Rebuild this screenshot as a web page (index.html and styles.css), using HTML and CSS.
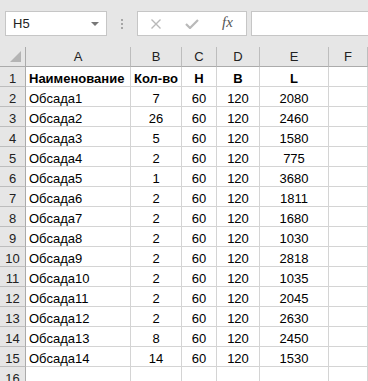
FILE: index.html
```html
<!DOCTYPE html>
<html lang="ru">

<head>
    <meta charset="UTF-8">
    <meta name="viewport" content="width=device-width, initial-scale=1.0">
    <title>Обсада</title>
    <link rel="stylesheet" href="styles.css">
</head>

<body>
    <div class="toolbar">
        <div class="name-box">
            <span>H5</span>
            <span class="arrow"></span>
        </div>
        <div class="grip"><i></i><i></i><i></i></div>
        <div class="buttons">
            <svg class="icon" width="12" height="10" viewBox="0 0 12 10">
                <path d="M1.5 0.5 L10.5 9.5 M10.5 0.5 L1.5 9.5" stroke="#b9b9b9" stroke-width="1.4" fill="none"/>
            </svg>
            <svg class="icon" width="14" height="10" viewBox="0 0 14 10">
                <path d="M1 5 L5 9 L13 1" stroke="#b9b9b9" stroke-width="2.2" fill="none"/>
            </svg>
            <span class="fx">fx</span>
        </div>
        <div class="formula"></div>
    </div>

    <div class="sheet">
        <div class="corner"><span class="tri"></span></div>
        <div class="col-head">A</div>
        <div class="col-head">B</div>
        <div class="col-head">C</div>
        <div class="col-head">D</div>
        <div class="col-head">E</div>
        <div class="col-head">F</div>
    </div>
    <div class="sheet" id="rows"></div>

    <script>
        const data = [
            ['Наименование', 'Кол-во', 'H', 'B', 'L'],
            ['Обсада1', 7, 60, 120, 2080],
            ['Обсада2', 26, 60, 120, 2460],
            ['Обсада3', 5, 60, 120, 1580],
            ['Обсада4', 2, 60, 120, 775],
            ['Обсада5', 1, 60, 120, 3680],
            ['Обсада6', 2, 60, 120, 1811],
            ['Обсада7', 2, 60, 120, 1680],
            ['Обсада8', 2, 60, 120, 1030],
            ['Обсада9', 2, 60, 120, 2818],
            ['Обсада10', 2, 60, 120, 1035],
            ['Обсада11', 2, 60, 120, 2045],
            ['Обсада12', 2, 60, 120, 2630],
            ['Обсада13', 8, 60, 120, 2450],
            ['Обсада14', 14, 60, 120, 1530],
            ['', '', '', '', '']
        ];

        const rows = document.getElementById('rows');
        data.forEach((row, i) => {
            let html = `<div class="row-head">${i + 1}</div>`;
            row.forEach((value, j) => {
                let cls = j === 0 ? 'cell left' : 'cell';
                if (i === 0) cls += ' bold';
                html += `<div class="${cls}">${value}</div>`;
            });
            html += '<div class="cell"></div>';
            rows.insertAdjacentHTML('beforeend', html);
        });
    </script>
</body>

</html>
```

FILE: styles.css
```css
body {
    font-family: 'Liberation Sans', Arial, sans-serif;
    margin: 0;
    padding: 0;
    background-color: #fff;
    color: #000;
    overflow: hidden;
}

.toolbar {
    display: flex;
    align-items: center;
    background-color: #e6e6e6;
    padding: 11px 0 11px 5px;
}

.name-box {
    box-sizing: border-box;
    width: 102px;
    height: 25px;
    background-color: #fff;
    border: 1px solid #c6c6c6;
    display: flex;
    align-items: center;
    justify-content: space-between;
    padding: 0 7px 0 7px;
    font-size: 13px;
    color: #222;
}

.arrow {
    width: 0;
    height: 0;
    border-left: 4px solid transparent;
    border-right: 4px solid transparent;
    border-top: 4px solid #777;
}

.grip {
    display: flex;
    flex-direction: column;
    gap: 2px;
    margin-left: 14px;
}

.grip i {
    display: block;
    width: 2px;
    height: 2px;
    background-color: #a6a6a6;
}

.buttons {
    box-sizing: border-box;
    width: 110px;
    height: 25px;
    margin-left: 14px;
    background-color: #fff;
    border: 1px solid #c6c6c6;
    display: flex;
    align-items: center;
    padding-left: 12px;
}

.buttons .icon {
    margin-right: 23px;
}

.buttons svg + svg {
    margin-right: 22px;
}

.fx {
    font-family: 'Liberation Serif', 'Times New Roman', serif;
    font-style: italic;
    font-size: 15px;
    color: #555;
    margin-top: -3px;
}

.formula {
    box-sizing: border-box;
    flex: 1;
    height: 25px;
    margin-left: 4px;
    margin-right: -4px;
    background-color: #fff;
    border: 1px solid #c6c6c6;
}

.sheet {
    display: grid;
    grid-template-columns: 26px 105px 51px 35px 43px 69px 1fr;
    font-size: 13px;
}

.corner,
.col-head,
.row-head,
.cell {
    box-sizing: border-box;
    height: 20px;
    padding-top: 6px;
    line-height: 12px;
    white-space: nowrap;
    overflow: hidden;
}

.corner {
    background-color: #e6e6e6;
    border-right: 1px solid #ababab;
    border-bottom: 1px solid #ababab;
    padding: 0 4px 4px 0;
    display: flex;
    justify-content: flex-end;
    align-items: flex-end;
}

.tri {
    width: 0;
    height: 0;
    border-left: 11px solid transparent;
    border-bottom: 11px solid #b4b4b4;
}

.col-head {
    background-color: #e6e6e6;
    border-right: 1px solid #bdbdbd;
    border-bottom: 1px solid #ababab;
    text-align: center;
    padding-top: 4px;
    color: #222;
}

.row-head {
    background-color: #e6e6e6;
    border-right: 1px solid #ababab;
    border-bottom: 1px solid #bdbdbd;
    text-align: center;
    color: #222;
}

.cell {
    border-right: 1px solid #d4d4d4;
    border-bottom: 1px solid #d4d4d4;
    text-align: center;
}

.cell.left {
    text-align: left;
    padding-left: 3px;
}

.cell.bold {
    font-weight: bold;
}
```
